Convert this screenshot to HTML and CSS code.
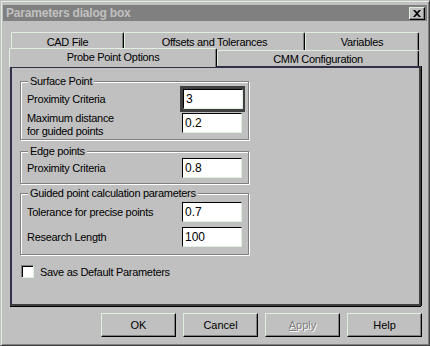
FILE: index.html
```html
<!DOCTYPE html>
<html lang="en">
<head>
    <meta charset="UTF-8">
    <title>Parameters dialog box</title>
    <link rel="stylesheet" href="styles.css">
</head>
<body>
    <div class="window">
        <div class="titlebar">
            <span class="title">Parameters dialog box</span>
            <button class="close-btn" aria-label="Close">
                <svg width="8" height="7" viewBox="0 0 8 7"><path d="M0 0h2l2 2 2-2h2L5 3.5 8 7H6L4 5 2 7H0l3-3.5z" fill="#000"/></svg>
            </button>
        </div>

        <div class="tabs">
            <div class="tab-row back">
                <div class="tab t-cad">CAD File</div>
                <div class="tab t-off">Offsets and Tolerances</div>
                <div class="tab t-var">Variables</div>
            </div>
            <div class="tab-row front">
                <div class="tab t-probe selected">Probe Point Options</div>
                <div class="tab t-cmm">CMM Configuration</div>
            </div>
        </div>

        <div class="panel">
            <div class="group g-surface">
                <span class="group-title">Surface Point</span>
                <div class="row r-first">
                    <label>Proximity Criteria</label>
                    <div class="focus-ring"><input class="field" type="text" value="3"></div>
                </div>
                <div class="row r-two">
                    <label>Maximum distance<br>for guided points</label>
                    <input class="field" type="text" value="0.2">
                </div>
            </div>

            <div class="group g-edge">
                <span class="group-title">Edge points</span>
                <div class="row">
                    <label>Proximity Criteria</label>
                    <input class="field" type="text" value="0.8">
                </div>
            </div>

            <div class="group g-guided">
                <span class="group-title">Guided point calculation parameters</span>
                <div class="row">
                    <label>Tolerance for precise points</label>
                    <input class="field" type="text" value="0.7">
                </div>
                <div class="row">
                    <label>Research Length</label>
                    <input class="field" type="text" value="100">
                </div>
            </div>

            <label class="check">
                <span class="box"></span>
                Save as Default Parameters
            </label>
        </div>

        <div class="buttons">
            <button class="btn">OK</button>
            <button class="btn">Cancel</button>
            <button class="btn disabled"><u>A</u>pply</button>
            <button class="btn">Help</button>
        </div>
    </div>
</body>
</html>
```

FILE: styles.css
```css
body {
    margin: 0;
    font-family: "Liberation Sans", Arial, sans-serif;
    font-size: 11px;
    letter-spacing: -0.3px;
    color: #000;
    background: #c0c0c0;
}

.window {
    width: 430px;
    height: 346px;
    box-sizing: border-box;
    padding: 2px;
    background: #c0c0c0;
    border: 1px solid;
    border-color: #c0c0c0 #404040 #404040 #c0c0c0;
    box-shadow: inset 1px 1px 0 #e0efe0, inset -1px -1px 0 #808080;
}

/* title bar */
.titlebar {
    margin-top: 2px;
    height: 16px;
    background: #808080;
    display: flex;
    align-items: center;
    justify-content: space-between;
    padding: 0 2px 0 3px;
}

.title {
    color: #c0c0c0;
    font-weight: bold;
    font-size: 12px;
    letter-spacing: -0.2px;
}

.close-btn {
    width: 16px;
    height: 13px;
    padding: 0;
    background: #c0c0c0;
    border: 1px solid;
    border-color: #e0efe0 #000 #000 #e0efe0;
    box-shadow: inset -1px -1px 0 #808080;
    display: flex;
    align-items: center;
    justify-content: center;
}

/* tabs */
.tabs {
    margin-top: 11px;
    padding-left: 8px;
}

.tab-row {
    display: flex;
}

.tab-row.back {
    height: 18px;
}

.tab-row.front {
    height: 16px;
}

.tab {
    box-sizing: border-box;
    text-align: center;
    background: #c0c0c0;
    border-top: 1px solid #e0efe0;
    border-left: 1px solid #e0efe0;
    border-right: 1px solid #000;
    box-shadow: inset -1px 0 0 #808080;
    border-radius: 2px 2px 0 0;
    line-height: 15px;
}

.back .tab {
    height: 18px;
    padding-top: 2px;
}

.t-cad { width: 113px; }
.t-off { width: 181px; }
.t-var { width: 114px; }

.front .tab {
    height: 16px;
}

.t-probe {
    width: 208px;
    margin-left: -2px;
}

.t-cmm {
    width: 202px;
    padding-top: 1px;
}

.tab.selected {
    height: 19px;
    margin-top: -2px;
    padding-top: 1px;
    position: relative;
    z-index: 1;
}

/* panel */
.panel {
    box-sizing: border-box;
    margin-left: 7px;
    width: 411px;
    height: 240px;
    border: 2px solid;
    border-color: #303048 #404040 #404040 #303048;
    box-shadow: 0 1px 0 #000, 1px 0 0 #000;
    padding: 0 0 0 8px;
}

.group {
    position: relative;
    box-sizing: border-box;
    width: 229px;
    border: 1px solid #808080;
    box-shadow: 1px 1px 0 #fff, inset 1px 1px 0 #fff;
    padding: 0 7px 0 6px;
}

.group-title {
    position: absolute;
    top: -7px;
    left: 7px;
    padding: 0 2px;
    background: #c0c0c0;
    line-height: 13px;
}

.g-surface {
    margin-top: 13px;
    padding-top: 4px;
}

.g-edge {
    margin-top: 11px;
    padding: 6px 7px 5px 6px;
}

.g-guided {
    margin-top: 9px;
    padding: 8px 7px 7px 6px;
}

.row {
    display: flex;
    align-items: center;
    justify-content: space-between;
}

.row label {
    line-height: 13px;
}

.r-first {
    height: 26px;
}

.r-two {
    height: 27px;
    align-items: flex-start;
}

.r-two .field {
    margin-top: 1px;
}

.g-guided .row + .row {
    margin-top: 5px;
}

.field {
    box-sizing: border-box;
    width: 60px;
    height: 20px;
    margin: 0 -1px 0 0;
    padding: 0 0 0 2px;
    font: inherit;
    font-size: 12px;
    background: #fff;
    border: 1px solid;
    border-color: #000 #e0efe0 #e0efe0 #000;
    outline: none;
}

.focus-ring {
    border: 3px solid #404040;
    margin-right: -4px;
    display: flex;
}

.check {
    display: flex;
    align-items: center;
    gap: 6px;
    margin-top: 10px;
    margin-left: 1px;
}

.box {
    width: 13px;
    height: 13px;
    box-sizing: border-box;
    background: #fff;
    border: 1px solid;
    border-color: #808080 #e0efe0 #e0efe0 #808080;
    box-shadow: inset 1px 1px 0 #000;
}

/* bottom buttons */
.buttons {
    display: flex;
    justify-content: flex-end;
    gap: 7px;
    margin-top: 7px;
    padding-right: 5px;
}

.btn {
    width: 75px;
    height: 24px;
    padding: 0;
    font: inherit;
    color: #000;
    background: #c0c0c0;
    border: 1px solid;
    border-color: #e0efe0 #000 #000 #e0efe0;
    box-shadow: inset -1px -1px 0 #808080;
}

.btn.disabled {
    color: #808080;
    text-shadow: 1px 1px 0 #fff;
}
```
